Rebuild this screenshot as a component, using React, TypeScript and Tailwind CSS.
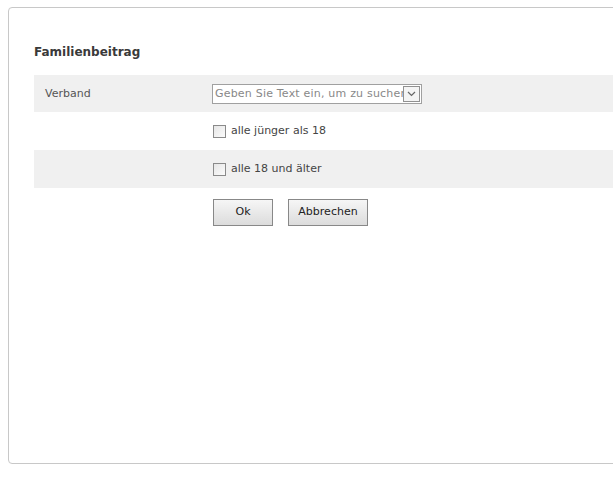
export default function App() {
  return (
    <div className="w-[613px] h-[477px] overflow-hidden bg-white" style={{ fontFamily: '"DejaVu Sans", Verdana, sans-serif' }}>
      <div className="ml-[8px] mt-[7px] w-[700px] h-[457px] border border-[#c8c8c8] rounded-[4px] pl-[25px] pt-[34px]">
        <h2 className="text-[12px] font-bold text-[#3a3a3a] h-[33px] leading-[20px]">Familienbeitrag</h2>

        <div className="flex items-center h-[37px] pt-[1px] bg-[#f0f0f0]">
          <div className="w-[178px] pl-[11px] text-[11px] text-[#555]">Verband</div>
          <div className="flex items-center w-[210px] h-[20px] border border-[#a0a0a0] bg-white overflow-hidden">
            <span className="flex-1 pl-[2px] text-[11px] tracking-[0.2px] text-[#888] whitespace-nowrap overflow-hidden">Geben Sie Text ein, um zu suchen</span>
            <span className="flex items-center justify-center w-[17px] h-[16px] mr-[1px] border border-[#909090] bg-[#f4f4f4]">
              <svg width="9" height="6" viewBox="0 0 9 6">
                <path d="M1 1 L4.5 4.5 L8 1" fill="none" stroke="#666" strokeWidth="1.2" />
              </svg>
            </span>
          </div>
        </div>

        <div className="flex items-center h-[38px] pl-[179px]">
          <span className="w-[13px] h-[13px] border border-[#8a8a8a] bg-gradient-to-br from-[#e6e6e6] to-[#fbfbfb]" />
          <span className="ml-[5px] text-[11px] text-[#444]">alle jünger als 18</span>
        </div>

        <div className="flex items-center h-[38px] pl-[179px] bg-[#f0f0f0]">
          <span className="w-[13px] h-[13px] border border-[#8a8a8a] bg-gradient-to-br from-[#e6e6e6] to-[#fbfbfb]" />
          <span className="ml-[5px] text-[11px] text-[#444]">alle 18 und älter</span>
        </div>

        <div className="flex gap-[15px] pl-[179px] mt-[11px]">
          <button className="w-[60px] h-[27px] border border-[#888] bg-gradient-to-b from-[#f6f6f6] to-[#dcdcdc] text-[11px] text-[#222]">Ok</button>
          <button className="w-[80px] h-[27px] border border-[#888] bg-gradient-to-b from-[#f6f6f6] to-[#dcdcdc] text-[11px] text-[#222]">Abbrechen</button>
        </div>
      </div>
    </div>
  );
}
